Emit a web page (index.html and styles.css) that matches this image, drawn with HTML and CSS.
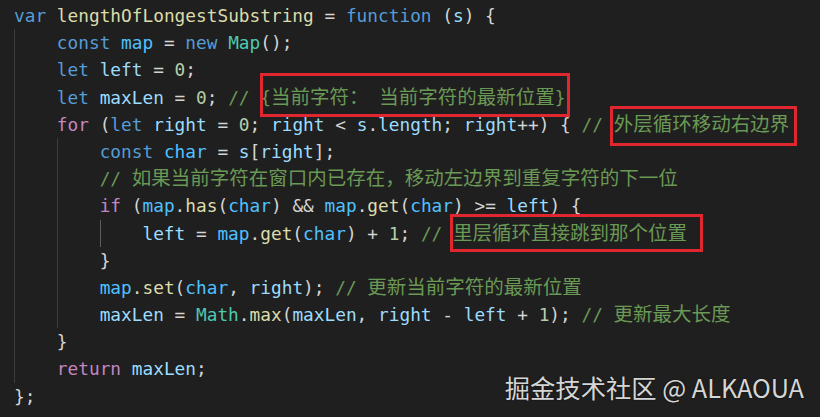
FILE: index.html
```html
<!DOCTYPE html>
<html lang="zh-CN">
<head>
<meta charset="utf-8">
<title>lengthOfLongestSubstring</title>
<link rel="stylesheet" href="styles.css">
</head>
<body>
<div class="editor">
<div class="line"><span class="kw">var</span> <span class="fn">lengthOfLongestSubstring</span> = <span class="kw">function</span> (<span class="v">s</span>) {</div>
<div class="line"><span class="ind"></span><span class="kw">const</span> <span class="c">map</span> = <span class="kw">new</span> <span class="ty">Map</span>();</div>
<div class="line"><span class="ind"></span><span class="kw">let</span> <span class="v">left</span> = <span class="n">0</span>;</div>
<div class="line"><span class="ind"></span><span class="kw">let</span> <span class="v">maxLen</span> = <span class="n">0</span>; <span class="cm">// {<span class="cjk">当前字符：</span> <span class="cjk">当前字符的最新位置</span>}</span></div>
<div class="line"><span class="ind"></span><span class="ctl">for</span> (<span class="kw">let</span> <span class="v">right</span> = <span class="n">0</span>; <span class="v">right</span> &lt; <span class="v">s</span>.<span class="v">length</span>; <span class="v">right</span>++) { <span class="cm">// <span class="cjk">外层循环移动右边界</span></span></div>
<div class="line"><span class="ind"></span><span class="ind"></span><span class="kw">const</span> <span class="c">char</span> = <span class="v">s</span>[<span class="v">right</span>];</div>
<div class="line"><span class="ind"></span><span class="ind"></span><span class="cm">// <span class="cjk">如果当前字符在窗口内已存在，移动左边界到重复字符的下一位</span></span></div>
<div class="line"><span class="ind"></span><span class="ind"></span><span class="ctl">if</span> (<span class="c">map</span>.<span class="fn">has</span>(<span class="c">char</span>) &amp;&amp; <span class="c">map</span>.<span class="fn">get</span>(<span class="c">char</span>) &gt;= <span class="v">left</span>) {</div>
<div class="line"><span class="ind"></span><span class="ind"></span><span class="ind active"></span><span class="v">left</span> = <span class="c">map</span>.<span class="fn">get</span>(<span class="c">char</span>) + <span class="n">1</span>; <span class="cm">// <span class="cjk">里层循环直接跳到那个位置</span></span></div>
<div class="line"><span class="ind"></span><span class="ind"></span>}</div>
<div class="line"><span class="ind"></span><span class="ind"></span><span class="c">map</span>.<span class="fn">set</span>(<span class="c">char</span>, <span class="v">right</span>); <span class="cm">// <span class="cjk">更新当前字符的最新位置</span></span></div>
<div class="line"><span class="ind"></span><span class="ind"></span><span class="v">maxLen</span> = <span class="ty">Math</span>.<span class="fn">max</span>(<span class="v">maxLen</span>, <span class="v">right</span> - <span class="v">left</span> + <span class="n">1</span>); <span class="cm">// <span class="cjk">更新最大长度</span></span></div>
<div class="line"><span class="ind"></span>}</div>
<div class="line"><span class="ind"></span><span class="ctl">return</span> <span class="v">maxLen</span>;</div>
<div class="line">};</div>
<div class="mark mark-1"></div>
<div class="mark mark-2"></div>
<div class="mark mark-3"></div>
<div class="watermark">掘金技术社区 @ ALKAOUA</div>
</div>
</body>
</html>
```
FILE: styles.css
```css
html, body {
  margin: 0;
  padding: 0;
  background: #1f1f1f;
}
body {
  width: 820px;
  height: 417px;
  overflow: hidden;
}
.editor {
  position: relative;
  width: 820px;
  height: 417px;
  box-sizing: border-box;
  padding: 2px 0 0 14px;
  font-family: "DejaVu Sans Mono", "Liberation Mono", "Noto Sans CJK SC", monospace;
  font-size: 17.8px;
  color: #d4d4d4;
}
.line {
  height: 27.2px;
  line-height: 27.2px;
  white-space: pre;
}
.ind {
  display: inline-block;
  width: 4ch;
  height: 27.2px;
  vertical-align: top;
  box-sizing: border-box;
  border-left: 1px solid #3c3c3c;
}
.ind.active {
  border-left-color: #5e5e5e;
}
.kw { color: #569cd6; }
.ctl { color: #c586c0; }
.fn { color: #dcdcaa; }
.v { color: #9cdcfe; }
.c { color: #4fc1ff; }
.ty { color: #4ec9b0; }
.n { color: #b5cea8; }
.cm { color: #6a9955; }
.cjk {
  font-family: "Noto Sans CJK SC", sans-serif;
  font-size: 19.5px;
  line-height: 1;
}
.mark {
  position: absolute;
  box-sizing: border-box;
  border: 3px solid #e0262e;
}
.mark-1 { left: 260px; top: 73px; width: 310px; height: 44px; }
.mark-2 { left: 610px; top: 106px; width: 187px; height: 40px; }
.mark-3 { left: 450px; top: 214px; width: 253px; height: 38px; }
.watermark {
  position: absolute;
  right: 16px;
  top: 374px;
  font-family: "Noto Sans CJK SC", "Noto Sans", sans-serif;
  font-size: 25.3px;
  line-height: 27px;
  color: #d6d6d6;
  text-shadow: 0 0 2px rgba(0, 0, 0, 0.6);
  white-space: nowrap;
}
```
